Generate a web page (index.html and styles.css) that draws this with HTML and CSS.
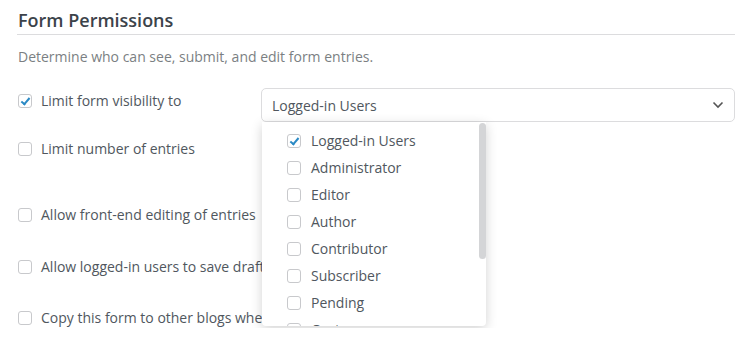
FILE: index.html
```html
<!DOCTYPE html>
<html lang="en">
<head>
    <meta charset="UTF-8">
    <title>Form Permissions</title>
    <link rel="stylesheet" href="styles.css">
</head>
<body>
    <div class="panel">
        <h2 class="panel-title">Form Permissions</h2>
        <p class="panel-desc">Determine who can see, submit, and edit form entries.</p>

        <div class="setting setting-visibility">
            <label class="check"><span class="box checked"></span>Limit form visibility to</label>
            <div class="select-wrap">
                <div class="select">
                    <span>Logged-in Users</span>
                    <svg class="chevron" width="12" height="8" viewBox="0 0 12 8"><path d="M1.5 1.5 6 6l4.5-4.5" fill="none" stroke="#555" stroke-width="1.6"/></svg>
                </div>
                <div class="dropdown">
                    <ul class="options">
                        <li><span class="box checked"></span>Logged-in Users</li>
                        <li><span class="box"></span>Administrator</li>
                        <li><span class="box"></span>Editor</li>
                        <li><span class="box"></span>Author</li>
                        <li><span class="box"></span>Contributor</li>
                        <li><span class="box"></span>Subscriber</li>
                        <li><span class="box"></span>Pending</li>
                        <li><span class="box"></span>Customer</li>
                    </ul>
                    <div class="scrollbar"></div>
                </div>
            </div>
        </div>

        <div class="setting setting-limit">
            <label class="check"><span class="box"></span>Limit number of entries</label>
        </div>
        <div class="setting setting-edit">
            <label class="check"><span class="box"></span>Allow front-end editing of entries</label>
        </div>
        <div class="setting setting-drafts">
            <label class="check"><span class="box"></span>Allow logged-in users to save drafts</label>
        </div>
        <div class="setting setting-copy">
            <label class="check"><span class="box"></span>Copy this form to other blogs when created</label>
        </div>
    </div>
</body>
</html>
```

FILE: styles.css
```css
* {
    box-sizing: border-box;
    margin: 0;
    padding: 0;
}

body {
    font-family: "Open Sans", "Noto Sans", sans-serif;
    font-size: 14px;
    color: #50575e;
    background: #fff;
    overflow: hidden;
}

.panel {
    padding: 8px 18px 0 17px;
}

.panel-title {
    font-size: 18px;
    font-weight: 600;
    color: #3c434a;
    line-height: 24px;
    padding-bottom: 2px;
    border-bottom: 1px solid #dcdcde;
    padding-left: 1px;
}

.panel-desc {
    color: #7b7f83;
    margin-top: 12px;
    line-height: 20px;
    padding-left: 1px;
}

.setting {
    display: flex;
    align-items: flex-start;
    padding-left: 1px;
}

.check {
    display: flex;
    align-items: center;
    gap: 9px;
    width: 243px;
    white-space: nowrap;
    line-height: 20px;
    flex-shrink: 0;
}

.box {
    width: 14px;
    height: 14px;
    border: 1px solid #c8c9cc;
    border-radius: 3px;
    background: #fff;
    flex-shrink: 0;
    position: relative;
}

.box.checked::after {
    content: "";
    position: absolute;
    left: 4px;
    top: 1px;
    width: 3px;
    height: 7px;
    border: solid #2b8ac5;
    border-width: 0 2.5px 2.5px 0;
    transform: rotate(40deg);
}

.setting-visibility {
    margin-top: 21px;
}

.setting-visibility .check {
    margin-top: 3px;
}

.setting-limit {
    margin-top: 17px;
}

.setting-edit {
    margin-top: 46px;
}

.setting-drafts {
    margin-top: 32px;
}

.setting-copy {
    margin-top: 31px;
}

.select-wrap {
    position: relative;
    flex: 1;
}

.select {
    height: 34px;
    border: 1px solid #dcdcde;
    border-radius: 5px;
    display: flex;
    align-items: center;
    justify-content: space-between;
    padding: 0 10px 0 10px;
    color: #50575e;
}

.chevron {
    display: block;
}

.dropdown {
    position: absolute;
    top: 34px;
    left: 1px;
    width: 224px;
    height: 204px;
    background: #fff;
    border-radius: 0 0 4px 4px;
    box-shadow: 0 3px 12px rgba(0, 0, 0, 0.18);
    overflow: hidden;
    z-index: 2;
}

.options {
    list-style: none;
    padding-top: 5px;
}

.options li {
    display: flex;
    align-items: center;
    gap: 10px;
    height: 27px;
    padding-left: 25px;
    color: #50575e;
}

.scrollbar {
    position: absolute;
    top: 1px;
    right: 0;
    width: 7px;
    height: 136px;
    background: #d4d5d7;
    border-radius: 4px;
}
```
